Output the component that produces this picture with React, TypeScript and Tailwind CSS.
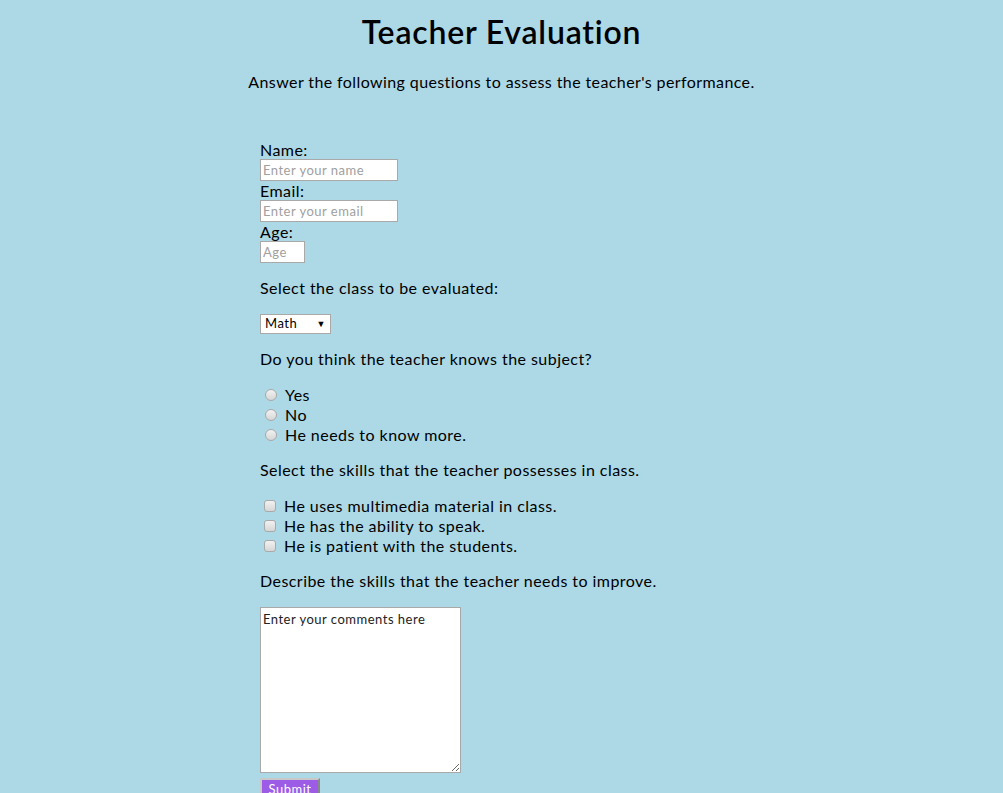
import React from "react";

const font = { fontFamily: '"Lato", "Open Sans", sans-serif' };

function Radio({ label }: { label: string }) {
  return (
    <label className="flex items-center h-[20px] text-[16px] text-black">
      <span className="ml-[5px] mr-[8px] w-[12px] h-[12px] rounded-full border border-[#a9a9a9] bg-gradient-to-b from-[#f2f2f2] to-[#d6d6d6] shrink-0" />
      <span>{label}</span>
    </label>
  );
}

function Check({ label }: { label: string }) {
  return (
    <label className="flex items-center h-[20px] text-[16px] text-black">
      <span className="ml-[4px] mr-[8px] w-[12px] h-[12px] rounded-[3px] border border-[#a9a9a9] bg-gradient-to-b from-[#f2f2f2] to-[#d6d6d6] shrink-0" />
      <span>{label}</span>
    </label>
  );
}

const inputCls =
  "h-[22px] bg-white border border-[#a9a9a9] px-[2px] text-[13px] tracking-[0.5px] placeholder:text-[#a0a0a0] outline-none";

export default function App() {
  return (
    <div className="min-h-[793px] bg-[#add8e6] text-black tracking-[0.45px]" style={font}>
      <div className="pt-[13px] text-center">
        <h1 className="text-[32px] leading-[38px] font-semibold tracking-[0.8px]">Teacher Evaluation</h1>
        <p className="mt-[21px] text-[16px] leading-[20px] tracking-[0.4px]">
          Answer the following questions to assess the teacher's performance.
        </p>
      </div>
      <form className="ml-[260px] mt-[48px] flex flex-col items-start text-[16px]">
        <label className="leading-[19px]">Name:</label>
        <input placeholder="Enter your name" className={"w-[138px] " + inputCls} />
        <label className="leading-[19px]">Email:</label>
        <input placeholder="Enter your email" className={"w-[138px] " + inputCls} />
        <label className="leading-[19px]">Age:</label>
        <input placeholder="Age" className={"w-[45px] " + inputCls} />
        <p className="mt-[16px] leading-[18px]">Select the class to be evaluated:</p>
        <div className="mt-[17px] w-[71px] h-[20px] bg-white border border-[#a9a9a9] flex items-center justify-between pl-[4px] pr-[4px] text-[13px] tracking-[0.5px]">
          <span>Math</span>
          <span className="text-[9px]">▼</span>
        </div>
        <p className="mt-[16px] leading-[18px]">Do you think the teacher knows the subject?</p>
        <div className="mt-[17px] flex flex-col">
          <Radio label="Yes" />
          <Radio label="No" />
          <Radio label="He needs to know more." />
        </div>
        <p className="mt-[16px] leading-[18px]">Select the skills that the teacher possesses in class.</p>
        <div className="mt-[17px] flex flex-col">
          <Check label="He uses multimedia material in class." />
          <Check label="He has the ability to speak." />
          <Check label="He is patient with the students." />
        </div>
        <p className="mt-[16px] leading-[18px]">Describe the skills that the teacher needs to improve.</p>
        <textarea
          defaultValue="Enter your comments here"
          className="mt-[17px] w-[201px] h-[166px] bg-white border border-[#a9a9a9] px-[2px] py-[2px] text-[13px] tracking-[0.5px] text-[#222] outline-none"
        />
        <button
          type="button"
          className="mt-[5px] w-[60px] h-[24px] bg-[#9c5ce6] text-white text-[13px] tracking-[0.5px] border-2 border-[#c8c8c8] border-b-[#888] border-r-[#888]"
        >
          Submit
        </button>
      </form>
    </div>
  );
}
